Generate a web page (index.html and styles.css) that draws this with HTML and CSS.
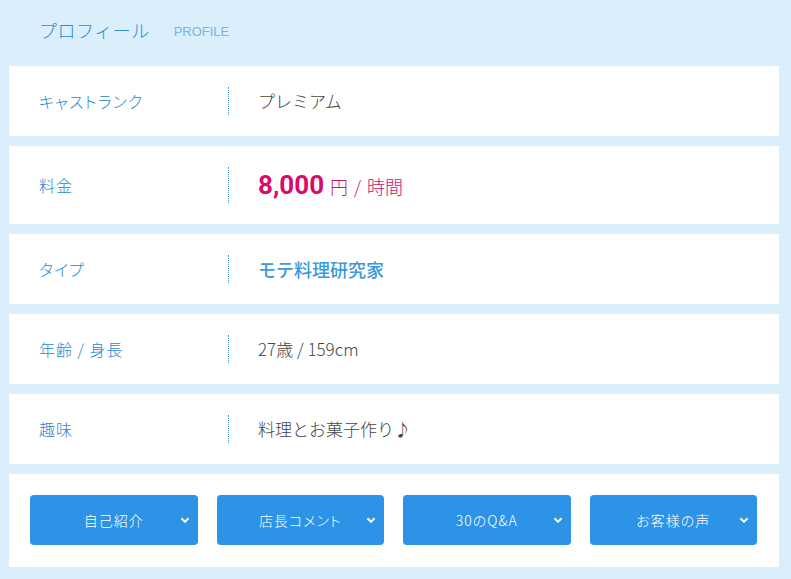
FILE: index.html
```html
<!DOCTYPE html>
<html lang="ja">
<head>
  <meta charset="UTF-8">
  <meta name="viewport" content="width=device-width, initial-scale=1.0">
  <title>プロフィール</title>
  <link rel="stylesheet" href="styles.css">
</head>
<body>

<div class="profile">
  <h2 class="profile-title">プロフィール <span class="profile-sub">PROFILE</span></h2>

  <div class="profile-row">
    <div class="profile-label">キャストランク</div>
    <div class="profile-value">プレミアム</div>
  </div>
  <div class="profile-row">
    <div class="profile-label">料金</div>
    <div class="profile-value price"><b class="price-num">8,000</b> 円 <span class="price-slash">/</span> 時間</div>
  </div>
  <div class="profile-row">
    <div class="profile-label">タイプ</div>
    <div class="profile-value type">モテ料理研究家</div>
  </div>
  <div class="profile-row">
    <div class="profile-label">年齢 / 身長</div>
    <div class="profile-value">27歳 / 159cm</div>
  </div>
  <div class="profile-row">
    <div class="profile-label">趣味</div>
    <div class="profile-value">料理とお菓子作り♪</div>
  </div>

  <div class="profile-buttons">
    <button class="toggle">自己紹介<svg class="chev" viewBox="0 0 8 5"><path d="M1 1 L4 4 L7 1" /></svg></button>
    <button class="toggle">店長コメント<svg class="chev" viewBox="0 0 8 5"><path d="M1 1 L4 4 L7 1" /></svg></button>
    <button class="toggle">30のQ&amp;A<svg class="chev" viewBox="0 0 8 5"><path d="M1 1 L4 4 L7 1" /></svg></button>
    <button class="toggle">お客様の声<svg class="chev" viewBox="0 0 8 5"><path d="M1 1 L4 4 L7 1" /></svg></button>
  </div>
</div>

</body>
</html>
```

FILE: styles.css
```css
body {
  margin: 0;
  background: #daeefc;
  font-family: "Noto Sans CJK JP", "Noto Sans", sans-serif;
  font-weight: 300;
}
.profile {
  padding: 0 12px 12px 9px;
}
.profile-title {
  margin: 0;
  height: 66px;
  padding-left: 30px;
  display: flex;
  align-items: center;
  padding-bottom: 6px;
  box-sizing: border-box;
  font-size: 18px;
  font-weight: 300;
  letter-spacing: 0.5px;
  color: #2f8ad0;
}
.profile-sub {
  margin-left: 24px;
  font-family: "Liberation Sans", sans-serif;
  font-size: 13px;
  font-weight: normal;
  letter-spacing: 0;
  color: #7bb6e0;
  padding-top: 3px;
}
.profile-row {
  display: flex;
  align-items: center;
  background: #fff;
  padding: 21px 0 21px 30px;
  margin-bottom: 10px;
}
.profile-label {
  width: 189px;
  font-size: 16px;
  letter-spacing: 1px;
  font-feature-settings: "palt";
  color: #2a86cf;
}
.profile-value {
  border-left: 1px dotted #4b93c7;
  padding-left: 29px;
  line-height: 28px;
  height: 28px;
  font-size: 17px;
  color: #444;
}
.price {
  height: 36px;
  line-height: 36px;
  font-size: 18px;
  color: #c8106f;
}
.price-num {
  font-family: "Roboto", sans-serif;
  font-size: 26px;
  font-weight: bold;
  color: #d80a6c;
  margin-right: 2px;
}
.price-slash {
  margin: 0 2px;
}
.type {
  font-weight: 500;
  color: #3c98dc;
  font-size: 18px;
}
.profile-buttons {
  display: grid;
  grid-template-columns: repeat(4, 1fr);
  gap: 19px;
  background: #fff;
  padding: 21px 22px 22px 21px;
}
.toggle {
  position: relative;
  height: 50px;
  border: none;
  border-radius: 4px;
  background: #2c93e6;
  color: #fff;
  font-family: "Noto Sans CJK JP", sans-serif;
  font-size: 14px;
  font-weight: 300;
  letter-spacing: 1px;
  font-feature-settings: "palt";
  cursor: pointer;
}
.chev {
  position: absolute;
  right: 8px;
  top: 22px;
  width: 10px;
  height: 6px;
  fill: none;
  stroke: #fff;
  stroke-width: 1.6;
}
```
